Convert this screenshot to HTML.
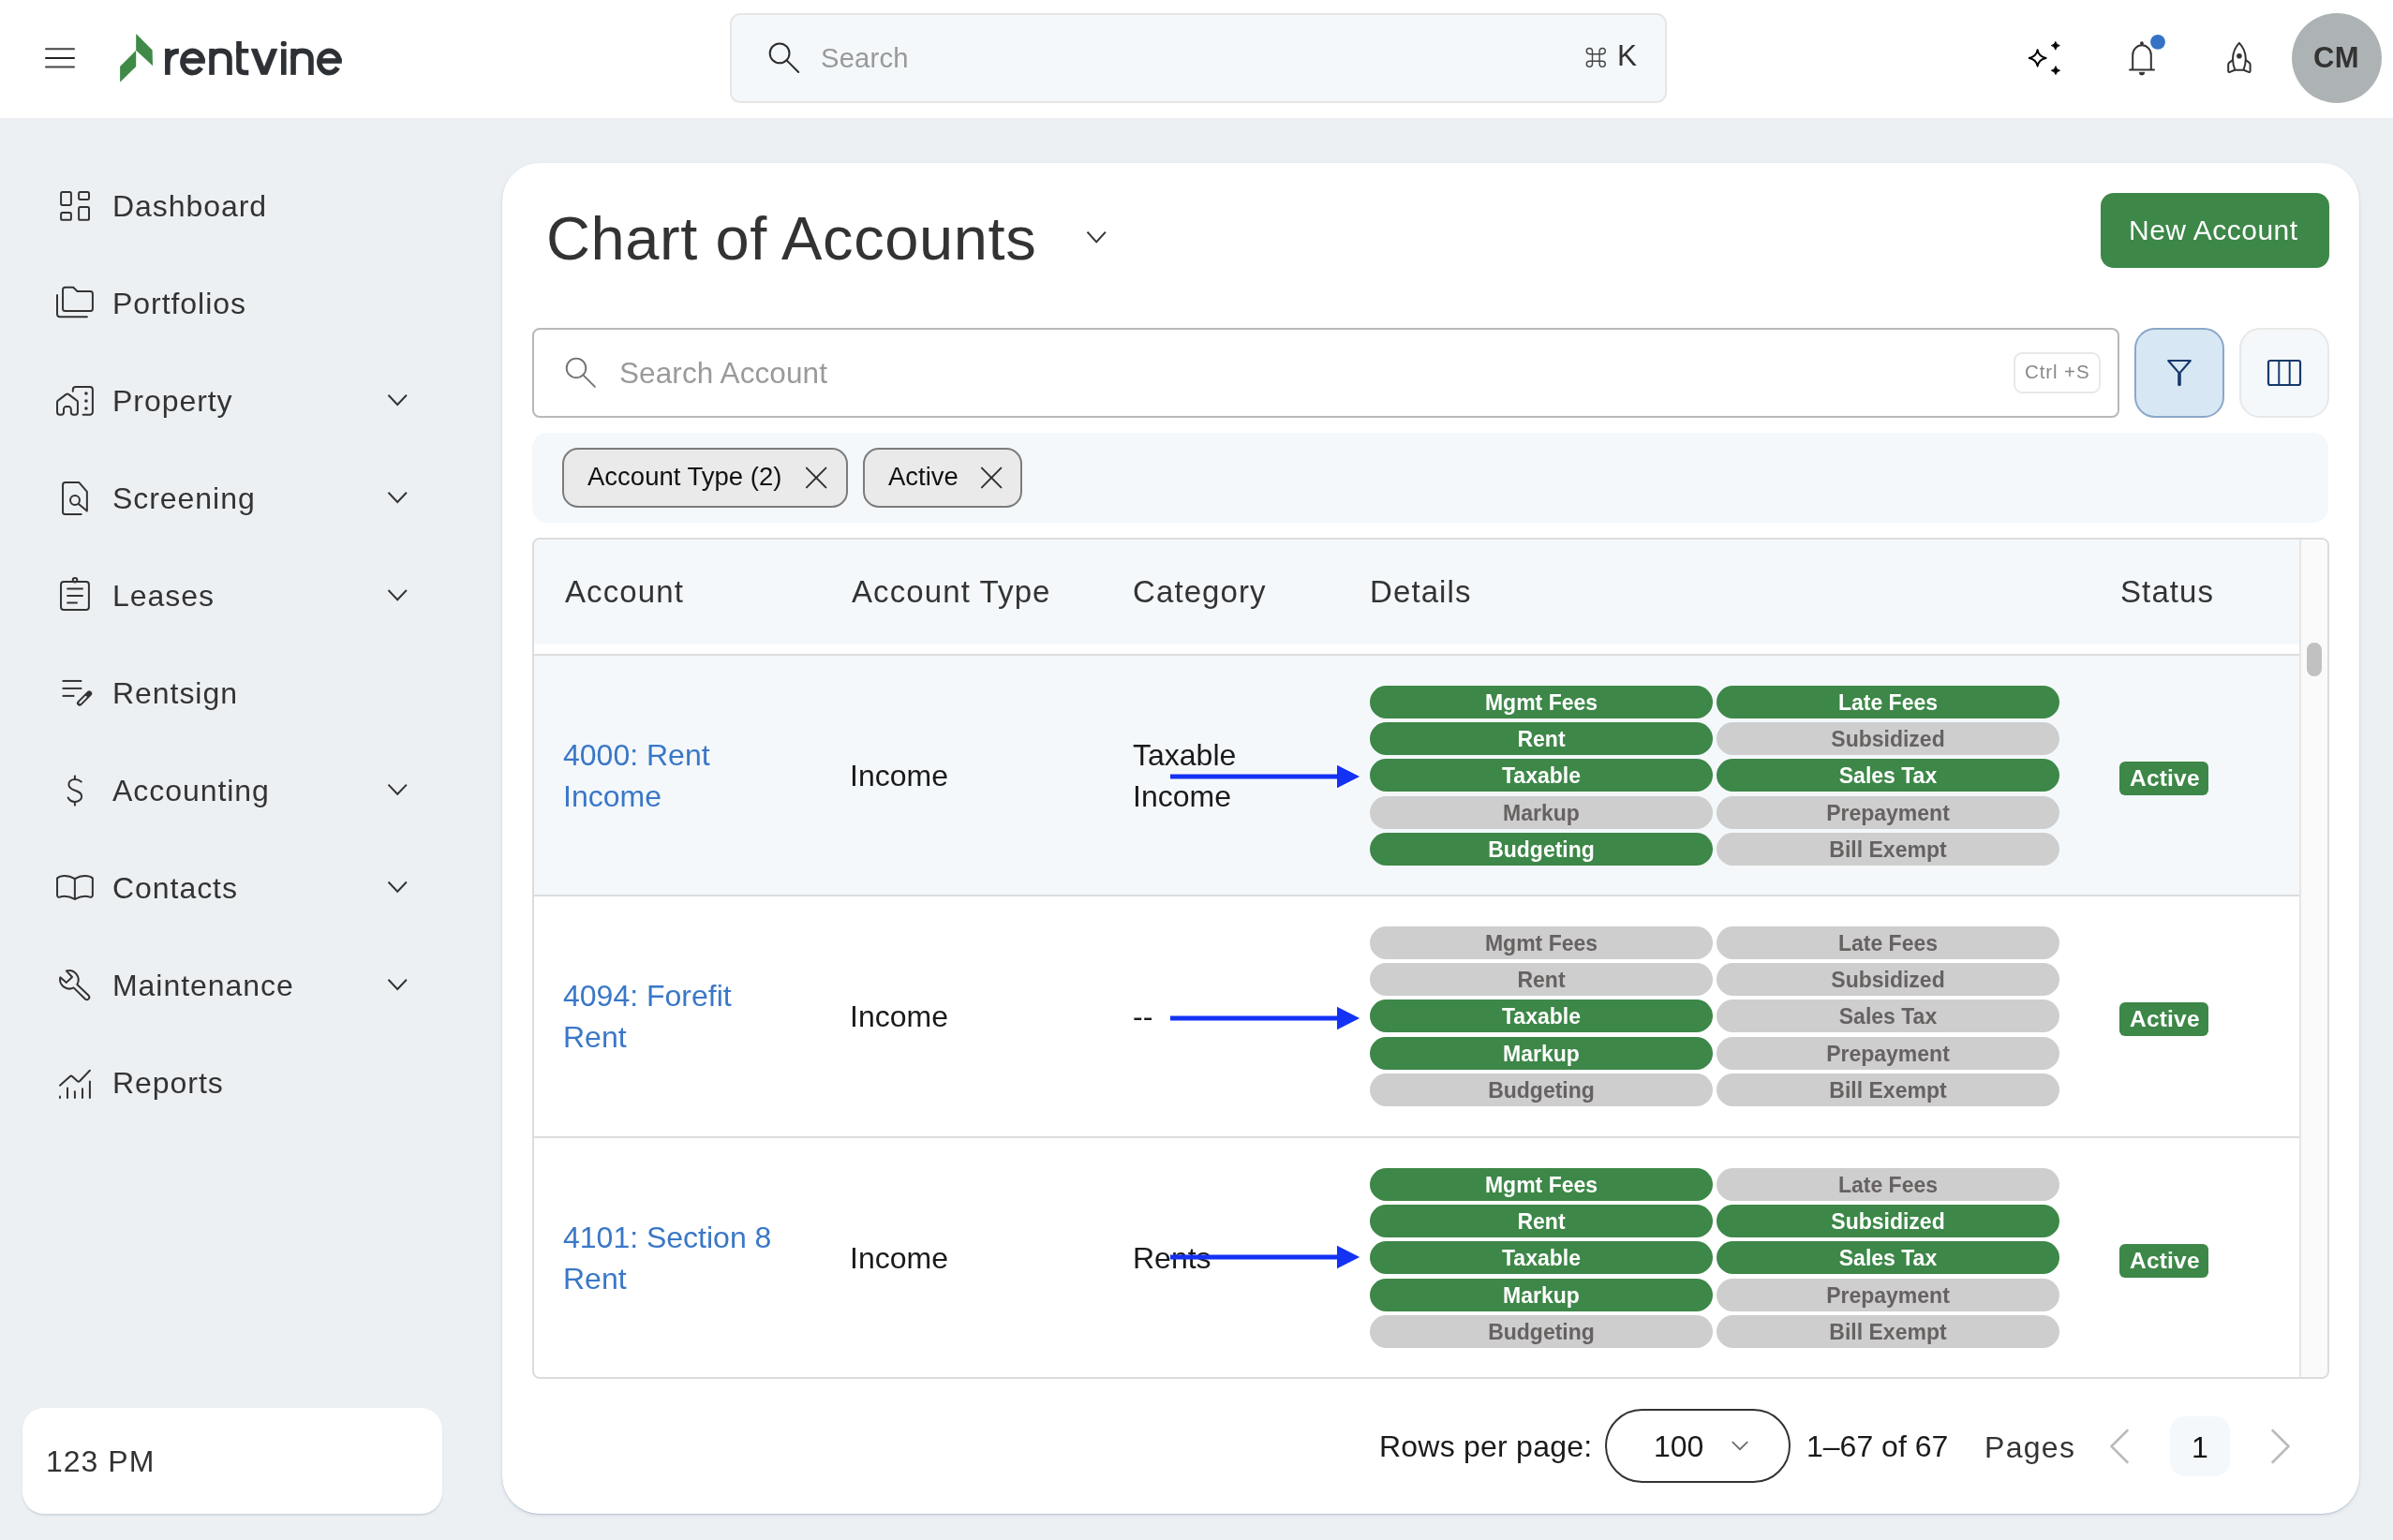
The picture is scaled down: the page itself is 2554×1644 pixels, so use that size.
<!DOCTYPE html>
<html><head><meta charset="utf-8"><title>Chart of Accounts</title>
<style>
html,body{margin:0;padding:0;}
body{width:2554px;height:1644px;position:relative;overflow:hidden;background:#edf0f3;font-family:"Liberation Sans",sans-serif;}
.t{position:absolute;white-space:nowrap;will-change:transform;}
.r{position:absolute;}
.pill{position:absolute;height:35px;border-radius:18px;font-size:23px;font-weight:bold;line-height:37px;text-align:center;white-space:nowrap;will-change:transform;}
</style></head><body>
<div class="r" style="left:0px;top:0px;width:2554px;height:126px;background:#fff;"></div>
<svg class="r" style="left:0;top:0" width="100" height="126" viewBox="0 0 100 126">
<g stroke-width="2" stroke-linecap="round"><line x1="49" y1="52.3" x2="79" y2="52.3" stroke="#444"/><line x1="49" y1="62" x2="79" y2="62" stroke="#222"/><line x1="49" y1="71.6" x2="79" y2="71.6" stroke="#444"/></g></svg>
<svg class="r" style="left:0;top:0" width="400" height="126" viewBox="0 0 400 126">
<polygon points="145.2,36 162.6,53.4 163,70.3 145.2,53.8" fill="#3e8a46"/>
<polygon points="145.2,53.8 145.2,71 128.1,87.8 128.1,71" fill="#3e8a46"/>
<g fill="none" stroke="#2d3135" stroke-width="5.6" stroke-linejoin="round">
<path d="M178.85 51.9 V79.9"/>
<path d="M178.85 66 C179.3 58.5 183.5 54.6 190.9 54.6"/>
<path d="M194.9 65 H218.9" stroke-linecap="butt"/><path d="M216.1 65 A10.6 11.6 0 1 0 214.5 72.2"/><path d="M226.05 51.9 V79.9"/><path d="M226.05 63 C226.05 56.5 229.8 54.3 235.5 54.3 C241.2 54.3 244.95 56.8 244.95 63.5 V79.9"/>
<path d="M255 43.9 V71.5 C255 76 257.5 77.5 261.5 77.5 H265.3"/>
<path d="M252.2 54.35 H265.3" stroke-width="4.7"/>
<path d="M302.8 52.3 V79.9"/>
<path d="M313.05 51.9 V79.9"/><path d="M313.05 63 C313.05 56.5 316.8 54.3 322.5 54.3 C328.2 54.3 331.95 56.8 331.95 63.5 V79.9"/><path d="M340.8 65 H364.8" stroke-linecap="butt"/><path d="M362.0 65 A10.6 11.6 0 1 0 360.4 72.2"/>
</g>
<polygon points="268.2,52.3 274.3,52.3 282,72.3 289.7,52.3 295.8,52.3 285.2,79.4 278.8,79.4" fill="#2d3135" stroke="#2d3135" stroke-width="0.8" stroke-linejoin="round"/>
<rect x="299.8" y="43.9" width="6" height="5.5" rx="1.8" fill="#2d3135"/>
</svg>
<div class="r" style="left:779px;top:14px;width:1000px;height:96px;background:#f4f8fb;border:2px solid #e6e6e6;border-radius:11px;box-sizing:border-box;"></div>
<svg class="r" style="left:700px;top:0" width="1100" height="126" viewBox="700 0 1100 126">
<circle cx="832.1" cy="56.9" r="10.4" fill="none" stroke="#2c2c2c" stroke-width="2"/>
<line x1="839.6" y1="64.4" x2="852.2" y2="77" stroke="#2c2c2c" stroke-width="2" stroke-linecap="round"/>
<g fill="none" stroke="#444" stroke-width="1.4">
<path d="M1699.5 57.7 H1707.1 V65.2 H1699.5 Z"/>
<path d="M1699.5 57.7 V54.6 A3.1 3.1 0 1 0 1696.4 57.7 H1699.5"/>
<path d="M1707.1 57.7 H1710.2 A3.1 3.1 0 1 0 1707.1 54.6 V57.7"/>
<path d="M1707.1 65.2 V68.3 A3.1 3.1 0 1 0 1710.2 65.2 H1707.1"/>
<path d="M1699.5 65.2 H1696.4 A3.1 3.1 0 1 0 1699.5 68.3 V65.2"/>
</g></svg>
<div class="t" style="left:876.0px;top:48.0px;font-size:29.2px;line-height:29.2px;color:#999;font-weight:normal;letter-spacing:0.2px;">Search</div>
<div class="t" style="left:1725.5px;top:44.2px;font-size:31.5px;line-height:31.5px;color:#333;font-weight:normal;">K</div>
<svg class="r" style="left:2150px;top:0" width="300" height="126" viewBox="2150 0 300 126">
<path d="M2174.6 53.2 Q2175.7 60.4 2183.6 61.95 Q2175.7 63.5 2174.6 70.7 Q2173.5 63.5 2165.7 61.95 Q2173.5 60.4 2174.6 53.2 Z" fill="none" stroke="#000" stroke-width="1.9" stroke-linejoin="round"/>
<path d="M2193.8 44.4 Q2194.6 47.8 2198.3 48.6 Q2194.6 49.4 2193.8 53.2 Q2193 49.4 2189.25 48.6 Q2193 47.8 2193.8 44.4 Z" fill="#000" stroke="#000" stroke-width="0.9" stroke-linejoin="round"/>
<path d="M2194 70.7 Q2194.8 74.5 2198.6 75.3 Q2194.8 76.1 2194 79.6 Q2193.2 76.1 2189.25 75.3 Q2193.2 74.5 2194 70.7 Z" fill="#000" stroke="#000" stroke-width="0.9" stroke-linejoin="round"/>
<path d="M2276.2 74.4 V58.8 A9.8 10.5 0 0 1 2295.8 58.8 V74.4" fill="none" stroke="#333" stroke-width="2"/>
<line x1="2273" y1="74.4" x2="2299" y2="74.4" stroke="#333" stroke-width="2" stroke-linecap="round"/>
<path d="M2283.2 77.3 H2288.8 A2.8 2.8 0 0 1 2283.2 77.3 Z" fill="#333" stroke="#333" stroke-width="0.8"/>
<circle cx="2285.9" cy="46.2" r="1.9" fill="#333"/>
<circle cx="2303" cy="44.8" r="7.9" fill="#3573c6"/>
<path d="M2389.9 45.9 C2385.5 50.5 2383 56 2383 63 C2383 67.5 2384 71.5 2385.5 74.8 H2394.3 C2395.8 71.5 2396.8 67.5 2396.8 63 C2396.8 56 2394.3 50.5 2389.9 45.9 Z" fill="none" stroke="#333" stroke-width="2" stroke-linejoin="round"/>
<path d="M2382.6 64.4 L2379.5 66.6 C2378.6 67.3 2378.2 68 2378.2 69 V75.8 C2378.2 76.8 2379 77.3 2380 76.9 L2384.5 75" fill="none" stroke="#333" stroke-width="2" stroke-linejoin="round" stroke-linecap="round"/>
<path d="M2397.2 64.4 L2400.3 66.6 C2401.2 67.3 2401.6 68 2401.6 69 V75.8 C2401.6 76.8 2400.8 77.3 2399.8 76.9 L2395.3 75" fill="none" stroke="#333" stroke-width="2" stroke-linejoin="round" stroke-linecap="round"/>
<circle cx="2389.9" cy="59.8" r="2.8" fill="#333"/>
</svg>
<div class="r" style="left:2446px;top:14px;width:96px;height:96px;background:#adb3b5;border-radius:50%;"></div>
<div class="t" style="left:2469.3px;top:45.9px;font-size:31px;line-height:31px;color:#333;font-weight:bold;letter-spacing:0.4px;">CM</div>
<div class="t" style="left:119.5px;top:203.9px;font-size:32px;line-height:32px;color:#333;font-weight:normal;letter-spacing:0.95px;">Dashboard</div>
<div class="t" style="left:119.5px;top:308.1px;font-size:32px;line-height:32px;color:#333;font-weight:normal;letter-spacing:0.95px;">Portfolios</div>
<div class="t" style="left:119.5px;top:411.9px;font-size:32px;line-height:32px;color:#333;font-weight:normal;letter-spacing:0.95px;">Property</div>
<div class="t" style="left:119.5px;top:515.9px;font-size:32px;line-height:32px;color:#333;font-weight:normal;letter-spacing:0.95px;">Screening</div>
<div class="t" style="left:119.5px;top:620.1px;font-size:32px;line-height:32px;color:#333;font-weight:normal;letter-spacing:0.95px;">Leases</div>
<div class="t" style="left:119.5px;top:724.4px;font-size:32px;line-height:32px;color:#333;font-weight:normal;letter-spacing:0.95px;">Rentsign</div>
<div class="t" style="left:119.5px;top:827.7px;font-size:32px;line-height:32px;color:#333;font-weight:normal;letter-spacing:0.95px;">Accounting</div>
<div class="t" style="left:119.5px;top:931.6px;font-size:32px;line-height:32px;color:#333;font-weight:normal;letter-spacing:0.95px;">Contacts</div>
<div class="t" style="left:119.5px;top:1035.9px;font-size:32px;line-height:32px;color:#333;font-weight:normal;letter-spacing:0.95px;">Maintenance</div>
<div class="t" style="left:119.5px;top:1139.9px;font-size:32px;line-height:32px;color:#333;font-weight:normal;letter-spacing:0.95px;">Reports</div>
<svg class="r" style="left:0;top:0" width="500" height="1300" viewBox="0 0 500 1300"><polyline points="414.5,421.8 424.2,432 433.9,421.8" fill="none" stroke="#333" stroke-width="2"/><polyline points="414.5,525.8 424.2,536 433.9,525.8" fill="none" stroke="#333" stroke-width="2"/><polyline points="414.5,630.0 424.2,640.2 433.9,630.0" fill="none" stroke="#333" stroke-width="2"/><polyline points="414.5,837.5999999999999 424.2,847.8 433.9,837.5999999999999" fill="none" stroke="#333" stroke-width="2"/><polyline points="414.5,941.5 424.2,951.7 433.9,941.5" fill="none" stroke="#333" stroke-width="2"/><polyline points="414.5,1045.8 424.2,1056 433.9,1045.8" fill="none" stroke="#333" stroke-width="2"/><g fill="none" stroke="#333" stroke-width="2" stroke-linejoin="round" stroke-linecap="round">
<rect x="65.1" y="205.1" width="10.8" height="13.8" rx="1.6"/><rect x="84.1" y="205.1" width="10.9" height="7.8" rx="1.6"/>
<rect x="65.1" y="227.1" width="10.8" height="7.7" rx="1.6"/><rect x="84.1" y="221" width="10.9" height="13.8" rx="1.6"/>
<path d="M69.55 306.85 H78.2 L82.5 310.9 H96.4 A2.5 2.5 0 0 1 98.9 313.4 V329.5 A2.5 2.5 0 0 1 96.4 332 H69.55 A2.5 2.5 0 0 1 67.05 329.5 V309.35 A2.5 2.5 0 0 1 69.55 306.85 Z"/>
<path d="M61 315 V335.3 A3 3 0 0 0 64 338.3 H92.9"/>
<path d="M61.04 440 V429.3 A2 2 0 0 1 61.9 427.6 L70.7 420.9 A2 2 0 0 1 73.1 420.9 L82.1 427.6 A2 2 0 0 1 82.95 429.3 V440 A2.7 2.7 0 0 1 80.25 442.7 H78.5 A2.7 2.7 0 0 1 75.8 440 V436.8 A2.7 2.7 0 0 0 73.1 434.1 H70.7 A2.7 2.7 0 0 0 68 436.8 V440 A2.7 2.7 0 0 1 65.3 442.7 H63.74 A2.7 2.7 0 0 1 61.04 440 Z"/>
<path d="M77.8 417.7 V416 A3 3 0 0 1 80.8 413 H95.9 A3 3 0 0 1 98.9 416 V439.7 A3 3 0 0 1 95.9 442.7 H88.6"/>
<circle cx="91.95" cy="420" r="1.8" fill="#333" stroke="none"/><circle cx="91.95" cy="428" r="1.8" fill="#333" stroke="none"/><circle cx="91.95" cy="436" r="1.8" fill="#333" stroke="none"/>
<path d="M86.7 549 H69.55 A2.5 2.5 0 0 1 67.05 546.5 V517.56 A2.5 2.5 0 0 1 69.55 515.06 H84.4 L92.86 524.8 V545.6 L83.9 538.1"/>
<circle cx="80" cy="533.9" r="5"/>
<rect x="65.03" y="621" width="29.87" height="29.9" rx="3"/>
<circle cx="80.03" cy="619.2" r="2.3"/>
<line x1="72.1" y1="628.4" x2="88" y2="628.4"/><line x1="72.1" y1="635.9" x2="88" y2="635.9"/><line x1="72.1" y1="643.4" x2="82" y2="643.4"/>
<line x1="66.6" y1="726.95" x2="87.3" y2="726.95" stroke-linecap="butt"/><line x1="66.6" y1="734.9" x2="87.3" y2="734.9" stroke-linecap="butt"/><line x1="66.6" y1="742.9" x2="79.4" y2="742.9" stroke-linecap="butt"/>
<path d="M86.7 834.6 C84.8 832.8 82.5 832 79.9 832 C76 832 73.4 834.5 73.4 837.5 C73.4 841.3 76.8 842.6 79.9 843.8 C84 845.3 87.2 846.5 87.2 850 C87.2 853.5 84 855.9 79.9 855.9 C76.5 855.9 74 854.3 72.7 851.5"/>
<line x1="79.9" y1="827.6" x2="79.9" y2="832" stroke-linecap="butt"/><line x1="79.9" y1="855.9" x2="79.9" y2="860.4" stroke-linecap="butt"/>
<path d="M79.87 938.2 C76 935.8 72 935 68.8 935 C65.5 935 63 935.8 61.04 937.5 V955.5 C61.04 957.3 62.3 958.2 63.8 957.6 C65.5 957 67 956.7 68.8 956.7 C72.5 956.7 76 957.8 79.87 959.8 C83.7 957.8 87.2 956.7 90.9 956.7 C92.7 956.7 94.2 957 95.9 957.6 C97.4 958.2 98.86 957.3 98.86 955.5 V937.5 C96.9 935.8 94.4 935 90.9 935 C87.7 935 83.7 935.8 79.87 938.2 Z"/>
<line x1="79.87" y1="938.2" x2="79.87" y2="959.8"/>
<path d="M70.8 1036.4 L77 1043 L70.9 1048.9 L64.3 1043.3 A10 10 0 0 0 78.6 1054.4 L90.9 1066.5 A2.62 2.62 0 0 0 94.6 1062.8 L82.3 1051 A10 10 0 0 0 70.8 1036.4 Z"/>
<path d="M64 1158.7 L74.6 1149.2 A2 2 0 0 1 77.3 1149.2 L82.5 1154 A2 2 0 0 0 85.2 1154 L95.9 1142.7"/>
<line x1="64" y1="1170.6" x2="64" y2="1171.9"/><line x1="72" y1="1161.4" x2="72" y2="1171.9"/><line x1="79.9" y1="1165.2" x2="79.9" y2="1171.9"/><line x1="88" y1="1162.3" x2="88" y2="1171.9"/><line x1="95.9" y1="1154.4" x2="95.9" y2="1171.9"/>
</g>
<path d="M85 750.6 L95.2 740.4" fill="none" stroke="#333" stroke-width="6" stroke-linecap="round"/>
<path d="M85.4 750.2 L91.6 744" fill="none" stroke="#edf0f3" stroke-width="2.2" stroke-linecap="round"/></svg>
<div class="r" style="left:24px;top:1503px;width:448px;height:113px;background:#fff;border-radius:23px;box-shadow:0 2px 2px rgba(130,150,180,0.28);"></div>
<div class="t" style="left:48.8px;top:1544.2px;font-size:32px;line-height:32px;color:#333;font-weight:normal;letter-spacing:1px;">123 PM</div>
<div class="r" style="left:536px;top:174px;width:1982px;height:1442px;background:#fff;border-radius:40px;box-shadow:0 1px 1.5px rgba(100,125,160,0.35), 0 2px 5px rgba(100,125,160,0.12);"></div>
<div class="t" style="left:583.0px;top:222.2px;font-size:65px;line-height:65px;color:#333;font-weight:normal;letter-spacing:0.6px;">Chart of Accounts</div>
<svg class="r" style="left:1150px;top:235px" width="40" height="30" viewBox="1150 235 40 30"><polyline points="1160.5,247.6 1170.2,258.3 1179.9,247.6" fill="none" stroke="#333" stroke-width="2"/></svg>
<div class="r" style="left:2242px;top:206px;width:244px;height:80px;background:#3d8748;border-radius:14px;"></div>
<div class="t" style="left:2272.2px;top:230.6px;font-size:30px;line-height:30px;color:#fff;font-weight:normal;letter-spacing:0.5px;">New Account</div>
<div class="r" style="left:568px;top:350px;width:1694px;height:96px;background:#fff;border:2px solid #b8b8b8;border-radius:8px;box-sizing:border-box;"></div>
<svg class="r" style="left:598px;top:375px" width="44" height="44" viewBox="598 375 44 44">
<circle cx="615" cy="392.9" r="10.3" fill="none" stroke="#717171" stroke-width="1.9"/>
<line x1="622.4" y1="400.3" x2="634.9" y2="412.8" stroke="#717171" stroke-width="1.9" stroke-linecap="round"/>
</svg>
<div class="t" style="left:660.5px;top:382.7px;font-size:31.5px;line-height:31.5px;color:#9a9a9a;font-weight:normal;letter-spacing:0.1px;">Search Account</div>
<div class="r" style="left:2149px;top:376px;width:93px;height:44px;background:#fff;border:2px solid #e8e8e8;border-radius:9px;box-sizing:border-box;"></div>
<div class="t" style="left:2161.0px;top:386.6px;font-size:20.5px;line-height:20.5px;color:#888;font-weight:normal;letter-spacing:0.9px;">Ctrl +S</div>
<div class="r" style="left:2278px;top:350px;width:96px;height:96px;background:#d8e7f4;border:2px solid #8aa8c8;border-radius:22px;box-sizing:border-box;"></div>
<svg class="r" style="left:2300px;top:375px" width="52" height="45" viewBox="2300 375 52 45">
<path d="M2314.2 385 H2337.8 L2326 398.6 Z" fill="none" stroke="#173a6b" stroke-width="2.2" stroke-linejoin="round"/>
<line x1="2326" y1="399.5" x2="2326" y2="410.5" stroke="#173a6b" stroke-width="3.6" stroke-linecap="round"/>
</svg>
<div class="r" style="left:2390px;top:350px;width:96px;height:96px;background:#f4f8fb;border:2px solid #e8e8e8;border-radius:22px;box-sizing:border-box;"></div>
<svg class="r" style="left:2410px;top:375px" width="56" height="45" viewBox="2410 375 56 45">
<rect x="2421" y="385" width="34" height="26" rx="2" fill="none" stroke="#173a6b" stroke-width="2.2"/>
<line x1="2432.3" y1="385" x2="2432.3" y2="411" stroke="#173a6b" stroke-width="2"/>
<line x1="2443.7" y1="385" x2="2443.7" y2="411" stroke="#173a6b" stroke-width="2"/>
</svg>
<div class="r" style="left:568px;top:462px;width:1917px;height:96px;background:#f4f8fb;border-radius:16px;"></div>
<div class="r" style="left:600px;top:478px;width:305px;height:64px;background:#eaeaea;border:2px solid #7c7c7c;border-radius:17px;box-sizing:border-box;"></div>
<div class="t" style="left:627.0px;top:494.7px;font-size:27.5px;line-height:27.5px;color:#111;font-weight:normal;">Account Type (2)</div>
<svg class="r" style="left:858px;top:497px" width="26" height="26" viewBox="0 0 26 26"><line x1="2.9" y1="2.6" x2="23.4" y2="23.4" stroke="#303030" stroke-width="1.9" stroke-linecap="round"/><line x1="23.4" y1="2.6" x2="2.9" y2="23.4" stroke="#303030" stroke-width="1.9" stroke-linecap="round"/></svg>
<div class="r" style="left:921px;top:478px;width:170px;height:64px;background:#eaeaea;border:2px solid #7c7c7c;border-radius:17px;box-sizing:border-box;"></div>
<div class="t" style="left:948.0px;top:494.7px;font-size:27.5px;line-height:27.5px;color:#111;font-weight:normal;">Active</div>
<svg class="r" style="left:1044.5px;top:497px" width="26" height="26" viewBox="0 0 26 26"><line x1="2.9" y1="2.6" x2="23.4" y2="23.4" stroke="#303030" stroke-width="1.9" stroke-linecap="round"/><line x1="23.4" y1="2.6" x2="2.9" y2="23.4" stroke="#303030" stroke-width="1.9" stroke-linecap="round"/></svg>
<div class="r" style="left:568px;top:574px;width:1918px;height:898px;background:#fff;border:2px solid #dcdcdc;border-radius:8px;box-sizing:border-box;"></div>
<div class="r" style="left:570px;top:576px;width:1884px;height:112px;background:#f4f8fb;border-top-left-radius:6px;"></div>
<div class="r" style="left:570px;top:698px;width:1884px;height:2px;background:#dcdcdc;"></div>
<div class="t" style="left:602.5px;top:615.3px;font-size:33px;line-height:33px;color:#333;font-weight:normal;letter-spacing:1.1px;">Account</div>
<div class="t" style="left:908.5px;top:615.3px;font-size:33px;line-height:33px;color:#333;font-weight:normal;letter-spacing:1.1px;">Account Type</div>
<div class="t" style="left:1208.5px;top:615.3px;font-size:33px;line-height:33px;color:#333;font-weight:normal;letter-spacing:1.1px;">Category</div>
<div class="t" style="left:1461.5px;top:615.3px;font-size:33px;line-height:33px;color:#333;font-weight:normal;letter-spacing:1.1px;">Details</div>
<div class="t" style="left:2262.5px;top:615.3px;font-size:33px;line-height:33px;color:#333;font-weight:normal;letter-spacing:1.1px;">Status</div>
<div class="r" style="left:2454px;top:576px;width:30px;height:894px;background:#fafafa;border-left:2px solid #e6e6e6;box-sizing:border-box;border-top-right-radius:6px;border-bottom-right-radius:6px;"></div>
<div class="r" style="left:2462px;top:686px;width:16px;height:36px;background:#c1c1c1;border-radius:8px;"></div>
<div class="r" style="left:570px;top:700px;width:1884px;height:255px;background:#f4f8fb;"></div>
<div class="r" style="left:570px;top:955px;width:1884px;height:2px;background:#dcdcdc;"></div>
<div class="t" style="left:601.0px;top:789.5px;font-size:32px;line-height:32px;color:#3a77c7;font-weight:normal;">4000: Rent</div>
<div class="t" style="left:601.0px;top:833.9px;font-size:32px;line-height:32px;color:#3a77c7;font-weight:normal;">Income</div>
<div class="t" style="left:906.5px;top:812.0px;font-size:32px;line-height:32px;color:#1a1a1a;font-weight:normal;">Income</div>
<div class="t" style="left:1209.0px;top:789.5px;font-size:32px;line-height:32px;color:#1a1a1a;font-weight:normal;">Taxable</div>
<div class="t" style="left:1209.0px;top:833.9px;font-size:32px;line-height:32px;color:#1a1a1a;font-weight:normal;">Income</div>
<svg class="r" style="left:1240px;top:811.4px" width="220" height="36" viewBox="1240 811.4 220 36"><g fill="#fff" stroke="#fff" stroke-width="2.4"><line x1="1249" y1="829.4" x2="1430" y2="829.4" stroke-width="7.2"/><polygon points="1427,817.1999999999999 1451.1,829.4 1427,841.6"/></g><line x1="1249" y1="829.4" x2="1430" y2="829.4" stroke="#1432f4" stroke-width="4.8"/><polygon points="1427,817.1999999999999 1451.1,829.4 1427,841.6" fill="#1432f4"/></svg>
<div class="pill" style="left:1462px;top:732px;width:366px;background:#3d8748;color:#fff">Mgmt Fees</div>
<div class="pill" style="left:1832px;top:732px;width:366px;background:#3d8748;color:#fff">Late Fees</div>
<div class="pill" style="left:1462px;top:771px;width:366px;background:#3d8748;color:#fff">Rent</div>
<div class="pill" style="left:1832px;top:771px;width:366px;background:#cecece;color:#676262">Subsidized</div>
<div class="pill" style="left:1462px;top:810px;width:366px;background:#3d8748;color:#fff">Taxable</div>
<div class="pill" style="left:1832px;top:810px;width:366px;background:#3d8748;color:#fff">Sales Tax</div>
<div class="pill" style="left:1462px;top:850px;width:366px;background:#cecece;color:#676262">Markup</div>
<div class="pill" style="left:1832px;top:850px;width:366px;background:#cecece;color:#676262">Prepayment</div>
<div class="pill" style="left:1462px;top:889px;width:366px;background:#3d8748;color:#fff">Budgeting</div>
<div class="pill" style="left:1832px;top:889px;width:366px;background:#cecece;color:#676262">Bill Exempt</div>
<div class="r" style="left:2262px;top:813px;width:95px;height:36px;background:#3d8748;border-radius:6px;"></div>
<div class="t" style="left:2272.5px;top:818.6px;font-size:24.5px;line-height:24.5px;color:#fff;font-weight:bold;letter-spacing:0.2px;">Active</div>
<div class="r" style="left:570px;top:1213px;width:1884px;height:2px;background:#dcdcdc;"></div>
<div class="t" style="left:601.0px;top:1046.5px;font-size:32px;line-height:32px;color:#3a77c7;font-weight:normal;">4094: Forefit</div>
<div class="t" style="left:601.0px;top:1090.9px;font-size:32px;line-height:32px;color:#3a77c7;font-weight:normal;">Rent</div>
<div class="t" style="left:906.5px;top:1069.0px;font-size:32px;line-height:32px;color:#1a1a1a;font-weight:normal;">Income</div>
<div class="t" style="left:1209.0px;top:1069.0px;font-size:32px;line-height:32px;color:#1a1a1a;font-weight:normal;">--</div>
<svg class="r" style="left:1240px;top:1069.4px" width="220" height="36" viewBox="1240 1069.4 220 36"><line x1="1249" y1="1087.4" x2="1430" y2="1087.4" stroke="#1432f4" stroke-width="4.8"/><polygon points="1427,1075.2 1451.1,1087.4 1427,1099.6000000000001" fill="#1432f4"/></svg>
<div class="pill" style="left:1462px;top:989px;width:366px;background:#cecece;color:#676262">Mgmt Fees</div>
<div class="pill" style="left:1832px;top:989px;width:366px;background:#cecece;color:#676262">Late Fees</div>
<div class="pill" style="left:1462px;top:1028px;width:366px;background:#cecece;color:#676262">Rent</div>
<div class="pill" style="left:1832px;top:1028px;width:366px;background:#cecece;color:#676262">Subsidized</div>
<div class="pill" style="left:1462px;top:1067px;width:366px;background:#3d8748;color:#fff">Taxable</div>
<div class="pill" style="left:1832px;top:1067px;width:366px;background:#cecece;color:#676262">Sales Tax</div>
<div class="pill" style="left:1462px;top:1107px;width:366px;background:#3d8748;color:#fff">Markup</div>
<div class="pill" style="left:1832px;top:1107px;width:366px;background:#cecece;color:#676262">Prepayment</div>
<div class="pill" style="left:1462px;top:1146px;width:366px;background:#cecece;color:#676262">Budgeting</div>
<div class="pill" style="left:1832px;top:1146px;width:366px;background:#cecece;color:#676262">Bill Exempt</div>
<div class="r" style="left:2262px;top:1070px;width:95px;height:36px;background:#3d8748;border-radius:6px;"></div>
<div class="t" style="left:2272.5px;top:1075.6px;font-size:24.5px;line-height:24.5px;color:#fff;font-weight:bold;letter-spacing:0.2px;">Active</div>
<div class="t" style="left:601.0px;top:1304.5px;font-size:32px;line-height:32px;color:#3a77c7;font-weight:normal;">4101: Section 8</div>
<div class="t" style="left:601.0px;top:1348.9px;font-size:32px;line-height:32px;color:#3a77c7;font-weight:normal;">Rent</div>
<div class="t" style="left:906.5px;top:1327.0px;font-size:32px;line-height:32px;color:#1a1a1a;font-weight:normal;">Income</div>
<div class="t" style="left:1209.0px;top:1327.0px;font-size:32px;line-height:32px;color:#1a1a1a;font-weight:normal;">Rents</div>
<svg class="r" style="left:1240px;top:1324.4px" width="220" height="36" viewBox="1240 1324.4 220 36"><line x1="1249" y1="1342.4" x2="1430" y2="1342.4" stroke="#1432f4" stroke-width="4.8"/><polygon points="1427,1330.2 1451.1,1342.4 1427,1354.6000000000001" fill="#1432f4"/></svg>
<div class="pill" style="left:1462px;top:1247px;width:366px;background:#3d8748;color:#fff">Mgmt Fees</div>
<div class="pill" style="left:1832px;top:1247px;width:366px;background:#cecece;color:#676262">Late Fees</div>
<div class="pill" style="left:1462px;top:1286px;width:366px;background:#3d8748;color:#fff">Rent</div>
<div class="pill" style="left:1832px;top:1286px;width:366px;background:#3d8748;color:#fff">Subsidized</div>
<div class="pill" style="left:1462px;top:1325px;width:366px;background:#3d8748;color:#fff">Taxable</div>
<div class="pill" style="left:1832px;top:1325px;width:366px;background:#3d8748;color:#fff">Sales Tax</div>
<div class="pill" style="left:1462px;top:1365px;width:366px;background:#3d8748;color:#fff">Markup</div>
<div class="pill" style="left:1832px;top:1365px;width:366px;background:#cecece;color:#676262">Prepayment</div>
<div class="pill" style="left:1462px;top:1404px;width:366px;background:#cecece;color:#676262">Budgeting</div>
<div class="pill" style="left:1832px;top:1404px;width:366px;background:#cecece;color:#676262">Bill Exempt</div>
<div class="r" style="left:2262px;top:1328px;width:95px;height:36px;background:#3d8748;border-radius:6px;"></div>
<div class="t" style="left:2272.5px;top:1333.6px;font-size:24.5px;line-height:24.5px;color:#fff;font-weight:bold;letter-spacing:0.2px;">Active</div>
<div class="t" style="left:1472.0px;top:1527.9px;font-size:32px;line-height:32px;color:#1a1a1a;font-weight:normal;letter-spacing:0.23px;">Rows per page:</div>
<div class="r" style="left:1713px;top:1504px;width:198px;height:79px;border:2px solid #333;border-radius:40px;box-sizing:border-box;"></div>
<div class="t" style="left:1765.0px;top:1527.9px;font-size:32px;line-height:32px;color:#1a1a1a;font-weight:normal;">100</div>
<svg class="r" style="left:1844px;top:1532px" width="26" height="22" viewBox="0 0 26 22"><polyline points="4.8,7.2 13,15.2 21.2,7.2" fill="none" stroke="#6a6a6a" stroke-width="1.7"/></svg>
<div class="t" style="left:1927.5px;top:1527.9px;font-size:32px;line-height:32px;color:#1a1a1a;font-weight:normal;">1–67 of 67</div>
<div class="t" style="left:2117.5px;top:1528.5px;font-size:32px;line-height:32px;color:#333;font-weight:normal;letter-spacing:1.3px;">Pages</div>
<svg class="r" style="left:2245px;top:1520px" width="34" height="48" viewBox="0 0 34 48"><polyline points="25.5,7 8.5,24 25.5,41" fill="none" stroke="#bbb" stroke-width="2.6" stroke-linecap="round" stroke-linejoin="round"/></svg>
<div class="r" style="left:2316px;top:1512px;width:64px;height:64px;background:#f4f8fb;border-radius:16px;"></div>
<div class="t" style="left:2339.0px;top:1528.5px;font-size:32px;line-height:32px;color:#111;font-weight:normal;">1</div>
<svg class="r" style="left:2417px;top:1520px" width="34" height="48" viewBox="0 0 34 48"><polyline points="8.5,7 25.5,24 8.5,41" fill="none" stroke="#bbb" stroke-width="2.6" stroke-linecap="round" stroke-linejoin="round"/></svg>
</body></html>
